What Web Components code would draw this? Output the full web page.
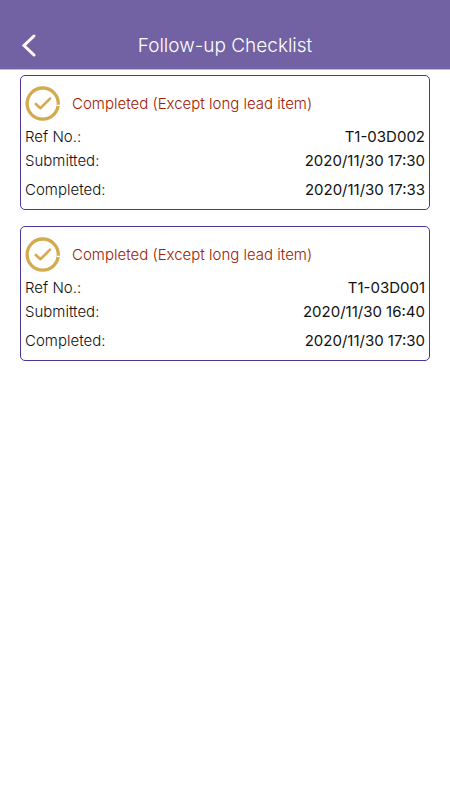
<!DOCTYPE html>
<html lang="en">
<head>
<meta charset="utf-8">
<meta name="viewport" content="width=device-width, initial-scale=1">
<title>Follow-up Checklist</title>
<style>
body { margin: 0; background: #fff; font-family: Inter, "Liberation Sans", sans-serif; }
</style>
</head>
<body>
<checklist-page>
  <app-header slot="header">Follow-up Checklist</app-header>
  <checklist-card status="Completed (Except long lead item)">
    <info-row label="Ref No.:">T1-03D002</info-row>
    <info-row label="Submitted:">2020/11/30 17:30</info-row>
    <info-row class="last" label="Completed:">2020/11/30 17:33</info-row>
  </checklist-card>
  <checklist-card status="Completed (Except long lead item)">
    <info-row label="Ref No.:">T1-03D001</info-row>
    <info-row label="Submitted:">2020/11/30 16:40</info-row>
    <info-row class="last" label="Completed:">2020/11/30 17:30</info-row>
  </checklist-card>
</checklist-page>
<script>
class ChecklistPage extends HTMLElement {
  constructor() {
    super();
    this.attachShadow({ mode: 'open' }).innerHTML = `
      <style>
        :host { display: block; min-height: 100vh; }
        main { display: flex; flex-direction: column; gap: 16px; padding: 5px 20px; }
      </style>
      <slot name="header"></slot>
      <main><slot></slot></main>`;
  }
}
class AppHeader extends HTMLElement {
  constructor() {
    super();
    this.attachShadow({ mode: 'open' }).innerHTML = `
      <style>
        :host { display: block; background: #7262a3; color: #fff; padding-top: 22px; border-bottom: 1px solid #c3bcd9; }
        header { display: grid; grid-template-columns: 58px 1fr 58px; align-items: center; height: 47px; }
        button { width: 58px; height: 47px; padding: 0; border: 0; background: none; color: inherit; display: grid; place-items: center; }
        h1 { margin: 0; font-size: 19px; line-height: 25px; font-weight: 300; text-align: center; }
      </style>
      <header>
        <button aria-label="Back"><svg width="16" height="25" viewBox="0 0 16 25" fill="none" stroke="currentColor" stroke-width="3" stroke-linecap="round"><path d="M13 3 3 12.5 13 22"/></svg></button>
        <h1><slot></slot></h1>
      </header>`;
  }
}
class ChecklistCard extends HTMLElement {
  constructor() {
    super();
    this.attachShadow({ mode: 'open' }).innerHTML = `
      <style>
        :host { display: block; border: 1px solid #4b3596; border-radius: 5px; padding: 8px 4px 7px; }
        .head { display: flex; align-items: center; gap: 11px; height: 40px; margin-bottom: 1px; }
        h2 { margin: 0; font-size: 15px; line-height: 20px; font-weight: 300; color: #a02000; }
      </style>
      <article>
        <div class="head">
          <svg width="36" height="36" viewBox="0 0 36 36" fill="none" stroke="#d3aa50" stroke-linecap="round" stroke-linejoin="round"><circle cx="17.7" cy="17.6" r="15.6" stroke-width="3.3"/><path d="M31.5 19.4h4" stroke="#fff" stroke-width="1.3" stroke-linecap="butt"/><path d="M10.8 18l4.7 4.2L25 12.7" stroke-width="2.6"/></svg>
          <h2></h2>
        </div>
        <slot></slot>
      </article>`;
  }
  connectedCallback() { this.shadowRoot.querySelector('h2').textContent = this.getAttribute('status'); }
}
class InfoRow extends HTMLElement {
  constructor() {
    super();
    this.attachShadow({ mode: 'open' }).innerHTML = `
      <style>
        :host { display: flex; justify-content: space-between; font-size: 15px; line-height: 24px; color: #111; }
        :host(.last) { margin-top: 5px; }
        .label { font-weight: 300; }
      </style>
      <span class="label"></span><span><slot></slot></span>`;
  }
  connectedCallback() { this.shadowRoot.querySelector('.label').textContent = this.getAttribute('label'); }
}
customElements.define('checklist-page', ChecklistPage);
customElements.define('app-header', AppHeader);
customElements.define('checklist-card', ChecklistCard);
customElements.define('info-row', InfoRow);
</script>
</body>
</html>
